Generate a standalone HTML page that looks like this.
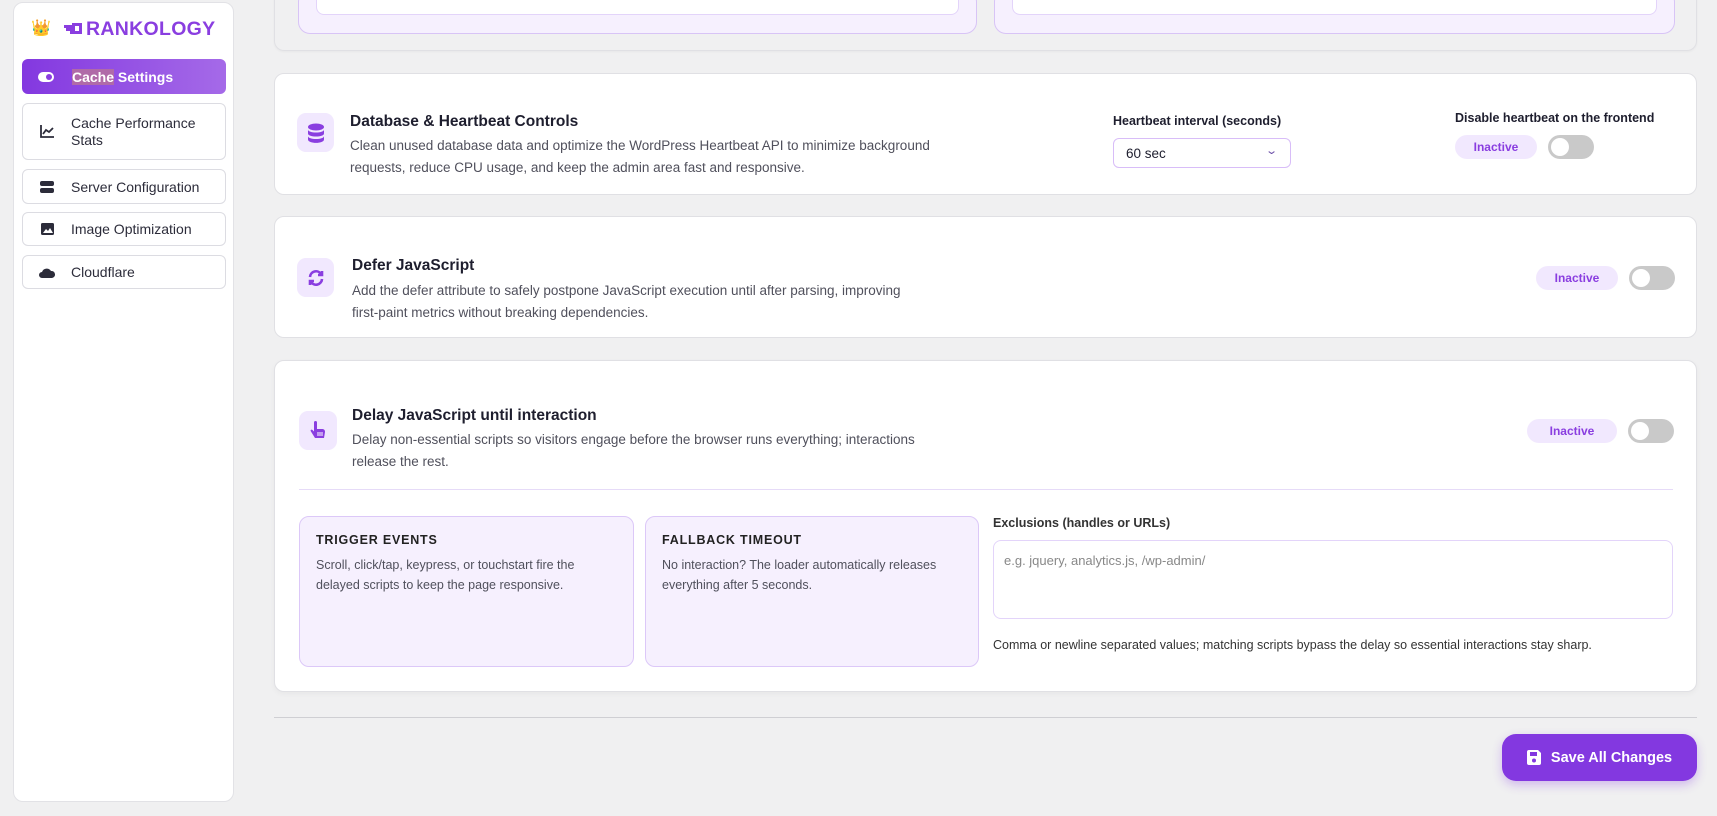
<!DOCTYPE html>
<html><head><meta charset="utf-8"><style>
*{box-sizing:border-box;margin:0;padding:0}
body{width:1717px;height:816px;background:#f0f0f1;font-family:"Liberation Sans",sans-serif;position:relative;overflow:hidden;color:#1e1e2e}
.a{position:absolute}
.side{position:absolute;left:13px;top:2px;width:221px;height:800px;background:#fff;border:1px solid #e2e2e6;border-radius:10px}
.nav{position:absolute;left:22px;width:204px;border:1px solid #dcdce2;border-radius:6px;background:#fff;font-size:14px;color:#2c2c3a;display:flex;align-items:center}
.nav .ic{width:48px;display:flex;justify-content:center}
.card{position:absolute;left:274px;width:1423px;background:#fff;border:1px solid #e0e0e4;border-radius:10px}
.icon{position:absolute;width:37px;height:39px;background:#f1e8fe;border-radius:9px;display:flex;align-items:center;justify-content:center}
.t{position:absolute;font-size:15.5px;font-weight:bold;color:#1e1e2e}
.d{position:absolute;font-size:13.5px;line-height:22px;color:#50505c}
.pill{position:absolute;height:24px;background:#f1e8fe;border-radius:12px;color:#8a3ee0;font-size:12px;font-weight:bold;display:flex;align-items:center;justify-content:center}
.tg{position:absolute;width:46px;height:24px;background:#c9c9c9;border-radius:12px}
.tg:after{content:"";position:absolute;left:3px;top:3px;width:18px;height:18px;border-radius:50%;background:#fff}
.box{position:absolute;top:516px;height:151px;background:#f6f0fe;border:1px solid #dcc8f8;border-radius:10px;padding:16px 16px}
.box h4{font-size:12.5px;letter-spacing:.8px;font-weight:bold;color:#222;margin-bottom:8px}
.box p{font-size:12.5px;line-height:20px;color:#50505c}
</style></head><body>
<div class="a" style="left:298px;top:-10px;width:679px;height:44px;background:#f6f0fe;border:1px solid #d8c4f6;border-radius:12px"></div>
<div class="a" style="left:316px;top:-10px;width:643px;height:25px;background:#fff;border:1px solid #e3d4fa;border-radius:8px"></div>
<div class="a" style="left:994px;top:-10px;width:681px;height:44px;background:#f6f0fe;border:1px solid #d8c4f6;border-radius:12px"></div>
<div class="a" style="left:1012px;top:-10px;width:645px;height:25px;background:#fff;border:1px solid #e3d4fa;border-radius:8px"></div>
<div class="a" style="left:274px;top:-20px;width:1423px;height:71px;border:1px solid #e0e0e4;border-top:none;border-radius:10px;box-shadow:0 1px 2px rgba(0,0,0,.04)"></div>

<div class="side">
 <div class="a" style="left:17px;top:15px;font-size:16px">👑</div>
 <svg class="a" style="left:50px;top:20px" width="18" height="11" viewBox="0 0 18 11"><path d="M0 2h8V0h10v11H6V8H2V5H0z" fill="#8a3ee0"/><rect x="11" y="3" width="4" height="5" fill="#fff"/></svg>
 <div class="a" style="left:72px;top:15px;font-size:19.5px;font-weight:900;color:#8a3ee0;letter-spacing:0.3px">RANKOLOGY</div>
</div>
<div class="nav" style="top:59px;height:35px;background:linear-gradient(90deg,#8338e0,#a56ae8);border:none;color:#fff;font-weight:bold"><div class="ic"><div style="width:16px;height:10px;background:#fff;border-radius:5px;position:relative"><div style="position:absolute;right:2px;top:2px;width:6px;height:6px;border-radius:50%;background:#8a3ee0"></div></div></div><span style="margin-left:2px"><span style="background:#b06aa8">Cache</span> Settings</span></div>
<div class="nav" style="top:103px;height:57px;line-height:17px"><div class="ic"><svg width="14" height="13" viewBox="0 0 14 13" fill="none" stroke="#2c2c3a" stroke-width="1.8"><path d="M1 0v12h13M3 9l3-4 3 2 4-4"/></svg></div><span>Cache Performance<br>Stats</span></div>
<div class="nav" style="top:169px;height:35px"><div class="ic"><svg width="14" height="12"><rect x="0" y="0" width="14" height="5" rx="2" fill="#2c2c3a"/><rect x="0" y="7" width="14" height="5" rx="2" fill="#2c2c3a"/></svg></div><span>Server Configuration</span></div>
<div class="nav" style="top:212px;height:34px"><div class="ic"><svg width="13" height="12"><rect width="13" height="12" rx="1.5" fill="#2c2c3a"/><path d="M2 10l3-4 2 2 2-3 3 5z" fill="#fff"/></svg></div><span>Image Optimization</span></div>
<div class="nav" style="top:255px;height:34px"><div class="ic"><svg width="16" height="11"><path d="M3 11a3 3 0 0 1 0-6 5 5 0 0 1 9-1 3.5 3.5 0 0 1 1 7z" fill="#2c2c3a"/></svg></div><span>Cloudflare</span></div>

<div class="card" style="top:73px;height:122px"></div>
<div class="icon" style="left:297px;top:113px"><svg width="16" height="20" viewBox="0 0 16 20"><ellipse cx="8" cy="4" rx="8" ry="3.5" fill="#8a3ee0"/><path d="M0 6.5c0 4 16 4 16 0v4c0 4-16 4-16 0zM0 13c0 4 16 4 16 0v3.5c0 4.5-16 4.5-16 0z" fill="#8a3ee0"/></svg></div>
<div class="t" style="left:350px;top:113px">Database &amp; Heartbeat Controls</div>
<div class="d" style="left:350px;top:135px">Clean unused database data and optimize the WordPress Heartbeat API to minimize background<br>requests, reduce CPU usage, and keep the admin area fast and responsive.</div>
<div class="a" style="left:1113px;top:114px;font-size:12.5px;font-weight:bold">Heartbeat interval (seconds)</div>
<div class="a" style="left:1113px;top:138px;width:178px;height:30px;border:1px solid #d8bdf8;border-radius:6px;font-size:13.5px;padding:7px 12px">60 sec<span style="position:absolute;right:14px;top:5px;color:#6b4ea8;font-size:11px;transform:scaleX(1.4)">⌄</span></div>
<div class="a" style="left:1455px;top:111px;font-size:12.5px;font-weight:bold">Disable heartbeat on the frontend</div>
<div class="pill" style="left:1455px;top:135px;width:82px">Inactive</div>
<div class="tg" style="left:1548px;top:135px"></div>

<div class="card" style="top:216px;height:122px"></div>
<div class="icon" style="left:297px;top:258px"><svg width="18" height="18" viewBox="0 0 18 18" fill="none" stroke="#8a3ee0" stroke-width="2.6"><path d="M3 8a6 6 0 0 1 11-3M15 10a6 6 0 0 1-11 3"/><path d="M15 2v4h-4M3 16v-4h4" fill="#8a3ee0"/></svg></div>
<div class="t" style="left:352px;top:257px">Defer JavaScript</div>
<div class="d" style="left:352px;top:280px">Add the defer attribute to safely postpone JavaScript execution until after parsing, improving<br>first-paint metrics without breaking dependencies.</div>
<div class="pill" style="left:1536px;top:266px;width:82px">Inactive</div>
<div class="tg" style="left:1629px;top:266px"></div>

<div class="card" style="top:360px;height:332px;box-shadow:0 2px 6px rgba(0,0,0,.04)"></div>
<div class="icon" style="left:299px;top:411px;width:38px"><svg width="16" height="20" viewBox="0 0 16 20"><path d="M4 1.5v9l-1.5-1.5c-1-1-2.5 0-1.7 1.2L5 17h9l1-6c0-2-1-3-3-3H7V1.5a1.5 1.5 0 0 0-3 0z" fill="#8a3ee0"/><path d="M8 11v4M10 11v4M12 11v4" stroke="#fff" stroke-width="1"/></svg></div>
<div class="t" style="left:352px;top:407px">Delay JavaScript until interaction</div>
<div class="d" style="left:352px;top:429px">Delay non-essential scripts so visitors engage before the browser runs everything; interactions<br>release the rest.</div>
<div class="pill" style="left:1527px;top:419px;width:90px">Inactive</div>
<div class="tg" style="left:1628px;top:419px"></div>
<div class="a" style="left:299px;top:489px;width:1374px;height:1px;background:#e6dbf8"></div>
<div class="box" style="left:299px;width:335px"><h4>TRIGGER EVENTS</h4><p>Scroll, click/tap, keypress, or touchstart fire the<br>delayed scripts to keep the page responsive.</p></div>
<div class="box" style="left:645px;width:334px"><h4>FALLBACK TIMEOUT</h4><p>No interaction? The loader automatically releases<br>everything after 5 seconds.</p></div>
<div class="a" style="left:993px;top:516px;font-size:12.5px;font-weight:bold;color:#333">Exclusions (handles or URLs)</div>
<div class="a" style="left:993px;top:540px;width:680px;height:79px;border:1px solid #e3d4fa;border-radius:8px;font-size:13px;color:#888;padding:12px 10px">e.g. jquery, analytics.js, /wp-admin/</div>
<div class="a" style="left:993px;top:638px;font-size:12.5px;color:#333">Comma or newline separated values; matching scripts bypass the delay so essential interactions stay sharp.</div>

<div class="a" style="left:274px;top:717px;width:1423px;height:1px;background:#cfcfd3"></div>
<div class="a" style="left:1502px;top:734px;width:195px;height:47px;background:#8338e0;border-radius:14px;box-shadow:0 4px 10px rgba(131,56,224,.3);color:#fff;font-size:14.5px;font-weight:bold;display:flex;align-items:center;justify-content:center;gap:10px"><svg width="14" height="15" viewBox="0 0 14 15"><path d="M0 2a2 2 0 0 1 2-2h9l3 3v10a2 2 0 0 1-2 2H2a2 2 0 0 1-2-2z" fill="#fff"/><rect x="3" y="2" width="7" height="4" fill="#8338e0"/><circle cx="7" cy="10.5" r="2" fill="#8338e0"/></svg>Save All Changes</div>
</body></html>
